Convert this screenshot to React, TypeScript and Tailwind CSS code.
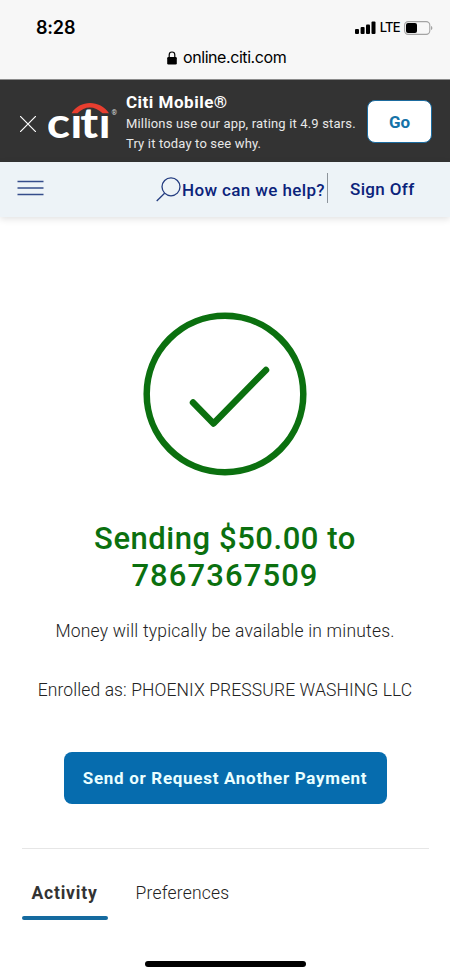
import React from 'react';

const LockIcon = () => (
  <svg className="h-[14px] w-[10px]" viewBox="0 0 10 14">
    <path d="M2.2 7V3.8a2.8 2.8 0 0 1 5.6 0V7" fill="none" stroke="#000" strokeWidth="1.2" />
    <rect x="0.2" y="6" width="9.6" height="7.5" rx="1.2" fill="#000" />
  </svg>
);

const SignalIcon = () => (
  <svg className="h-[13px] w-[21px]" viewBox="0 0 21 13">
    <rect x="0" y="8" width="4" height="5" rx="1" />
    <rect x="5.6" y="6" width="4" height="7" rx="1" />
    <rect x="11" y="3.5" width="4" height="9.5" rx="1" />
    <rect x="16.5" y="0.5" width="4" height="12.5" rx="1" />
  </svg>
);

const BatteryIcon = () => (
  <svg className="h-[14px] w-[29px]" viewBox="0 0 29 14">
    <rect x="0.6" y="0.6" width="25.2" height="12.8" rx="3.6" fill="none" stroke="#a3a3a3" strokeWidth="1.1" />
    <rect x="2" y="2" width="11" height="10" rx="2" fill="#000" />
    <path d="M27 5c1.8.4 1.8 3.6 0 4z" fill="#a3a3a3" />
  </svg>
);

// The arc stands in for the dots of both i's, so they are covered first
const CitiLogo = () => (
  <svg className="h-[60px] w-[70px]" viewBox="0 -9 70 60">
    <text transform="scale(1.15 1)" x="-1 19.3 28 44" y="38" fill="#fff" fontSize="42" fontWeight="700" fontFamily="Lato, sans-serif">citi</text>
    <rect x="22" y="0" width="12" height="15.5" fill="#333" />
    <rect x="51" y="0" width="11" height="15.5" fill="#333" />
    <path d="M23.5 13.2C32 -0.4 52 -0.4 61 13.2h-6.5C46.5 5.5 37 5.5 29.5 13.2z" fill="#e83e2f" />
    <text x="63.5" y="14.5" fill="#ddd" fontSize="7" fontFamily="Roboto, sans-serif">®</text>
  </svg>
);

const StatusBar = () => (
  <div className="h-20 border-b border-[#8c8c8c] bg-[#f7f7f7] font-[Inter,sans-serif] text-black">
    <div className="flex h-[46px] items-center justify-between pt-[9px] pr-[17px] pl-9">
      <span className="text-[18px] leading-none font-semibold tracking-[-0.2px]">8:28</span>
      <div className="flex items-center">
        <SignalIcon />
        <span className="ml-1 text-[13px] leading-none font-medium tracking-[-0.7px]">LTE</span>
        <span className="ml-1"><BatteryIcon /></span>
      </div>
    </div>
    <div className="flex items-center gap-[6px] pl-[167px]">
      <LockIcon />
      <span className="text-[16px] leading-[23px] tracking-[-0.43px]">online.citi.com</span>
    </div>
  </div>
);

const AppBanner = () => (
  <div className="flex h-[82px] items-center bg-[#333] pr-[18px] pl-5 text-white">
    <svg className="mt-[6px] h-4 w-4" viewBox="0 0 16 16" fill="none" stroke="#fff" strokeWidth="1.2">
      <path d="M0 0l16 16M16 0L0 16" />
    </svg>
    <div className="ml-3"><CitiLogo /></div>
    <div className="mt-[2px] ml-2 flex-1 whitespace-nowrap">
      <h2 className="text-[17px] leading-[23px] font-bold tracking-[0.5px]">Citi Mobile®</h2>
      <p className="text-[13px] leading-5 tracking-[0.16px] text-[#e8e8e8]">
        Millions use our app, rating it 4.9 stars.
        <br />
        Try it today to see why.
      </p>
    </div>
    <button className="h-[43px] w-[65px] rounded-lg border border-[#1b6b9f] bg-white pt-1 text-[17px] font-bold text-[#1673a8]">Go</button>
  </div>
);

const NavBar = () => (
  <nav className="flex h-[55px] items-center bg-[#edf3f7] pl-[17px] text-[#0b237b] shadow-[0_2px_7px_rgba(0,0,0,0.12)]">
    <svg className="mb-1 h-4 w-[27px]" viewBox="0 0 27 16" stroke="#354d8b" strokeWidth="1.3">
      <path d="M0.5 1.5h26M0.5 8h26M0.5 14.5h26" />
    </svg>
    <svg className="ml-[112px] h-[25px] w-[25px]" viewBox="0 0 25 25" fill="none" stroke="#233c80" strokeWidth="1.3">
      <circle cx="15" cy="9.8" r="9" />
      <path d="M8.6 16.2L0.7 24" />
    </svg>
    <span className="ml-px pt-[2px] text-[17px] font-medium tracking-[0.38px] whitespace-nowrap">How can we help?</span>
    <span className="mb-1 ml-[2px] h-[30px] w-px bg-[#8d949b]" />
    <span className="ml-[22px] text-[17px] font-medium tracking-[0.35px] whitespace-nowrap">Sign Off</span>
  </nav>
);

const App: React.FC = () => {
  return (
    <div className="flex h-[975px] w-[450px] flex-col overflow-hidden bg-white font-[Roboto,sans-serif] text-[#333]">
      <StatusBar />
      <AppBanner />
      <NavBar />
      <main className="flex flex-1 flex-col items-center pt-[95px]">
        <svg className="h-[164px] w-[164px]" viewBox="0 0 164 164" fill="none" stroke="#0b700f" strokeWidth="6.5">
          <circle cx="82" cy="82" r="78.3" />
          <path d="M50 90.5l20.5 21L123 58" strokeLinecap="round" strokeLinejoin="round" />
        </svg>
        <h1 className="mt-11 text-center text-[31px] leading-[37px] font-medium text-[#0b700f]">
          <span className="tracking-[0.55px]">Sending $50.00 to</span>
          <br />
          <span className="tracking-[1.1px]">7867367509</span>
        </h1>
        <p className="mt-[25px] text-[17.5px] leading-6 font-light tracking-[0.2px] text-[#222]">Money will typically be available in minutes.</p>
        <p className="mt-[35px] text-[17.5px] leading-6 font-light tracking-[0.1px] text-[#222]">Enrolled as: PHOENIX PRESSURE WASHING LLC</p>
        <button className="mt-[50px] h-[52px] w-[323px] rounded-lg bg-[#066cae] pt-[2px] text-[17px] font-bold tracking-[0.7px] text-[#eaffff]">
          Send or Request Another Payment
        </button>
        <div className="mt-11 w-[407px] border-t border-[#e6e6e6]">
          <div className="flex pt-8 text-[17.5px] leading-6">
            <div className="flex w-[86px] flex-col items-center">
              <span className="font-bold tracking-[0.8px]">Activity</span>
              <span className="mt-[11px] h-1 w-full rounded-full bg-[#156a9f]" />
            </div>
            <span className="ml-[28px] font-light tracking-[0.2px] text-[#222]">Preferences</span>
          </div>
        </div>
        <div className="mt-[41px] h-[6px] w-[161px] rounded-full bg-black" />
      </main>
    </div>
  );
};

export default App;
